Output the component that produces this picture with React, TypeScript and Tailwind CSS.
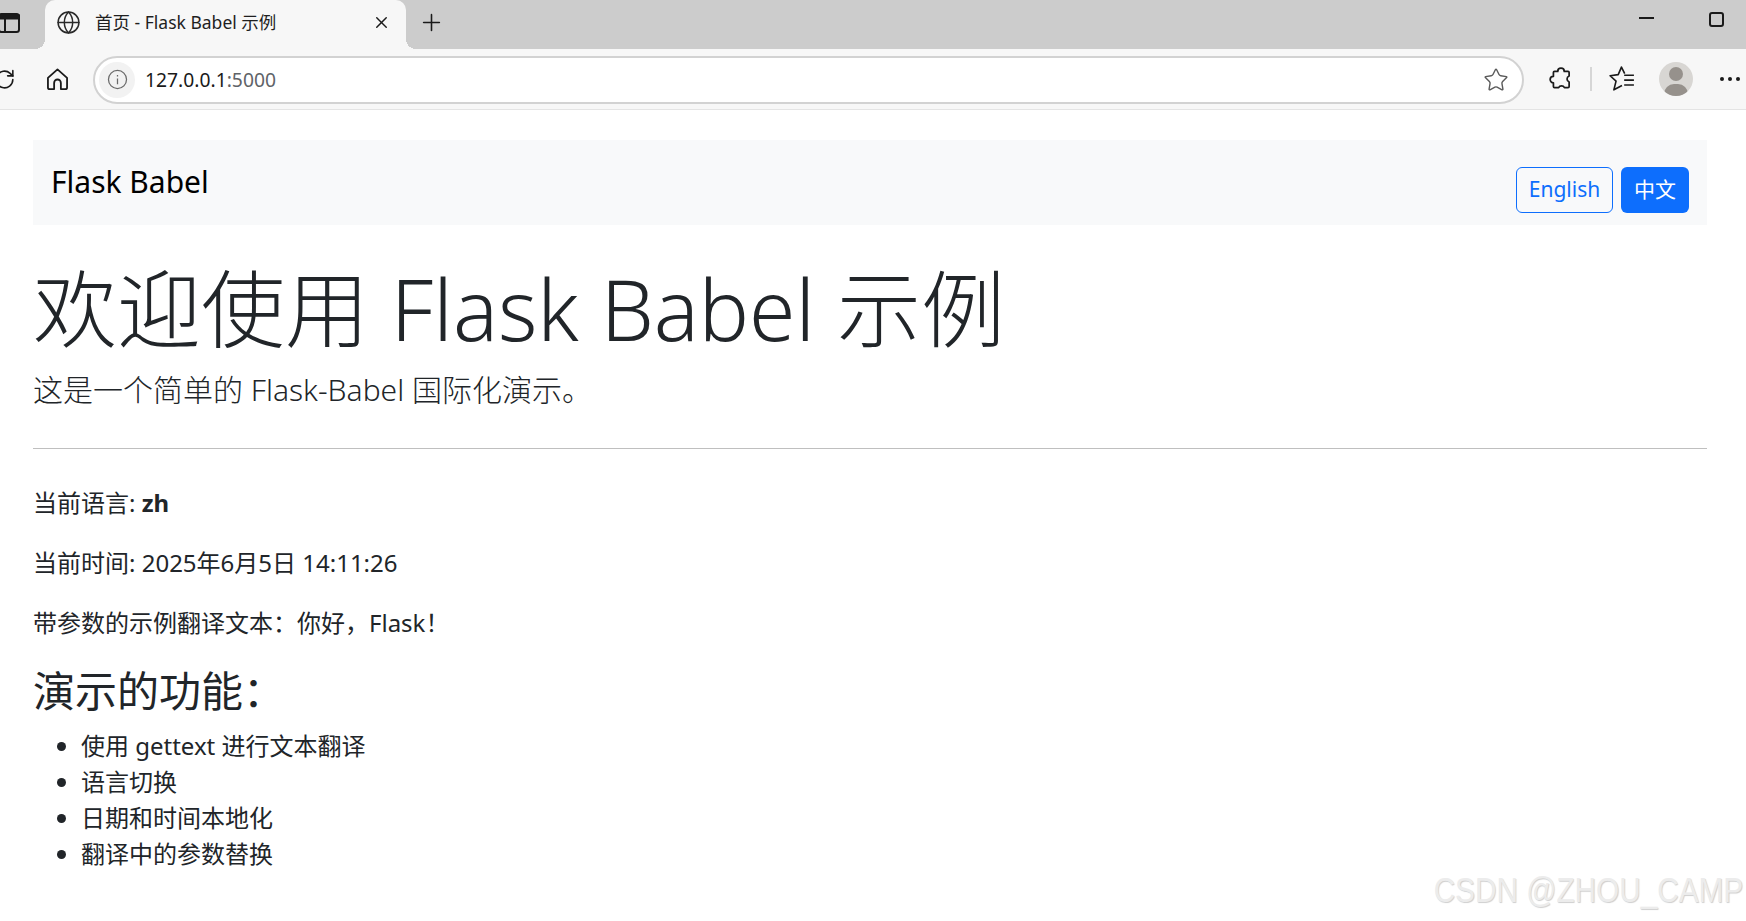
import { Globe, Plus, Star, X } from "lucide-react";

const features = ["使用 gettext 进行文本翻译", "语言切换", "日期和时间本地化", "翻译中的参数替换"];

function TabStrip() {
  return (
    <div className="flex h-[49px] bg-[#cccccc]">
      <svg viewBox="0 0 24 24" className="ml-[-3px] mt-[11px] h-[24px] w-[24px] shrink-0 text-[#1a1a1a]" fill="none" stroke="currentColor" strokeWidth="2">
        <rect x="2" y="3" width="20" height="18" rx="2.5" />
        <path d="M2 4.5h20v3H2z" fill="currentColor" />
        <path d="M8 8v13" />
      </svg>
      <div className="relative ml-[24px] flex h-[49px] w-[361px] items-start rounded-t-[10px] bg-[#f7f7f7] pl-[11px] pr-[15px] pt-[10px]">
        <span className="absolute bottom-0 left-[-10px] h-[10px] w-[10px] bg-[radial-gradient(circle_at_0_0,#cccccc_10px,#f7f7f7_10px)]" />
        <span className="absolute bottom-0 right-[-10px] h-[10px] w-[10px] bg-[radial-gradient(circle_at_100%_0,#cccccc_10px,#f7f7f7_10px)]" />
        <Globe className="h-[25px] w-[25px] shrink-0 text-[#2a2a2a]" strokeWidth={1.4} />
        <span className="ml-[14px] flex-1 text-[17.5px] leading-[24px] text-[#1f1f1f]">首页 - Flask Babel 示例</span>
        <X className="mt-[3px] h-[19px] w-[19px] text-[#1a1a1a]" strokeWidth={1.8} />
      </div>
      <Plus className="ml-[12px] mt-[9px] h-[27px] w-[27px] text-[#1a1a1a]" strokeWidth={1.4} />
      <div className="ml-auto flex items-start">
        <div className="mr-[55px] mt-[17px] h-[2px] w-[15px] bg-[#1a1a1a]" />
        <div className="mr-[22px] mt-[12px] h-[15px] w-[15px] rounded-[3px] border-2 border-[#1a1a1a]" />
      </div>
    </div>
  );
}

function Toolbar() {
  return (
    <div className="flex h-[61px] items-center border-b border-[#e4e4e4] bg-[#f7f7f7]">
      <svg viewBox="0 0 24 24" className="ml-[-8px] h-[25px] w-[25px] shrink-0 text-[#1a1a1a]" fill="none" stroke="currentColor" strokeWidth="1.5" strokeLinecap="round">
        <path d="M20 12a8 8 0 1 1-2.6-5.9L20 8.5" />
        <path d="M20 3.5v5h-5" />
      </svg>
      <svg viewBox="0 0 24 24" className="ml-[27px] h-[27px] w-[27px] shrink-0 text-[#1a1a1a]" fill="none" stroke="currentColor" strokeWidth="1.6" strokeLinejoin="round">
        <path d="M3.5 10.5 12 3l8.5 7.5V19a1.5 1.5 0 0 1-1.5 1.5h-4V15a3 3 0 0 0-6 0v5.5H5A1.5 1.5 0 0 1 3.5 19z" />
      </svg>
      <div className="ml-[22px] mt-[1px] flex h-[48px] w-[1431px] shrink-0 items-center rounded-full border-2 border-[#d2d2d2] bg-white pl-[4px] pr-[13px]">
        <div className="flex h-[36px] w-[36px] items-center justify-center rounded-full bg-[#f2f2f2]">
          <svg viewBox="0 0 20 20" className="h-[21px] w-[21px] text-[#6a6a6a]" fill="none" stroke="currentColor" strokeWidth="1.2">
            <circle cx="10" cy="10" r="8.6" />
            <path d="M10 9v5.5M10 5.8v1.4" />
          </svg>
        </div>
        <span className="ml-[10px] flex-1 text-[19.3px] text-[#1a1a1a]">
          127.0.0.1<span className="text-[#5f6368]">:5000</span>
        </span>
        <Star className="h-[26px] w-[26px] text-[#5a5a5a]" strokeWidth={1.3} />
      </div>
      <svg viewBox="0 0 24 24" className="ml-[24px] h-[26px] w-[26px] shrink-0 text-[#1a1a1a]" fill="none" stroke="currentColor" strokeWidth="1.6" strokeLinejoin="round">
        <path d="M9 5a3 3 0 0 1 6 0h3.5a1 1 0 0 1 1 1v3.2a3 3 0 0 0 0 5.6V19a1 1 0 0 1-1 1h-3.3a3 3 0 0 0-5.4 0H6a1 1 0 0 1-1-1v-3.5a3 3 0 0 1 0-6V6a1 1 0 0 1 1-1z" />
      </svg>
      <div className="ml-[16px] h-[24px] w-[2px] bg-[#d6d6d6]" />
      <svg viewBox="0 0 24 24" className="ml-[17px] h-[26px] w-[26px] shrink-0 text-[#1a1a1a]" fill="none" stroke="currentColor" strokeWidth="1.5" strokeLinejoin="round">
        <path d="M14.5 7 11.5 1 8.5 8 1 9l5.5 5L4.5 22l7.5-4" />
        <path d="M14 8.5h9M14 13h9M14 17.5h9" />
      </svg>
      <div className="relative ml-[24px] h-[34px] w-[34px] shrink-0 overflow-hidden rounded-full bg-[#d8d6d3]">
        <div className="absolute left-[10px] top-[5px] h-[14px] w-[14px] rounded-full bg-[#96918c]" />
        <div className="absolute left-[5px] top-[22px] h-[20px] w-[24px] rounded-full bg-[#96918c]" />
      </div>
      <div className="ml-[27px] flex gap-[4px]">
        <span className="h-[4px] w-[4px] rounded-full bg-[#1a1a1a]" />
        <span className="h-[4px] w-[4px] rounded-full bg-[#1a1a1a]" />
        <span className="h-[4px] w-[4px] rounded-full bg-[#1a1a1a]" />
      </div>
    </div>
  );
}

export default function App() {
  return (
    <div className="relative h-[921px] w-[1746px] overflow-hidden bg-white font-['Noto_Sans','Noto_Sans_CJK_SC',sans-serif] text-[24px] leading-[36px] text-[#212529]">
      <TabStrip />
      <Toolbar />
      <main className="pl-[33px] pr-[39px] pt-[30px]">
        <nav className="flex h-[85px] items-start justify-between bg-[#f8f9fa] px-[18px] pt-[27px]">
          <a className="mt-[-3px] text-[30px] leading-[36px] text-black">Flask Babel</a>
          <div className="flex gap-[8px] text-[21px] leading-[30px]">
            <button className="h-[46px] w-[97px] rounded-[6px] border-[1.5px] border-[#0d6efd] pb-[2px] text-[#0d6efd]">English</button>
            <button className="h-[46px] w-[68px] rounded-[6px] bg-[#0d6efd] pb-[3px] text-white">中文</button>
          </div>
        </nav>
        <h1 className="mt-[33px] text-[84px] font-light leading-[101px]">欢迎使用 Flask Babel 示例</h1>
        <p className="mt-[8px] text-[30px] font-light leading-[45px]">这是一个简单的 Flask-Babel 国际化演示。</p>
        <hr className="mt-[36px] border-t border-[#bfbfbf]" />
        <p className="mt-[36px]">
          当前语言: <strong>zh</strong>
        </p>
        <p className="mt-[24px]">当前时间: 2025年6月5日 14:11:26</p>
        <p className="mt-[24px]">带参数的示例翻译文本：你好，Flask！</p>
        <h3 className="mt-[25px] text-[42px] leading-[50px]">演示的功能：</h3>
        <ul className="mt-[12px] list-disc pl-[48px]">
          {features.map((item) => (
            <li key={item}>{item}</li>
          ))}
        </ul>
      </main>
      <div className="absolute bottom-[11px] right-[3px] origin-right scale-x-[0.85] font-['Liberation_Sans',sans-serif] text-[35px] leading-[40px] text-[#ececec] [text-shadow:1px_1px_1px_#cfcfcf]">
        CSDN @ZHOU_CAMP
      </div>
    </div>
  );
}
